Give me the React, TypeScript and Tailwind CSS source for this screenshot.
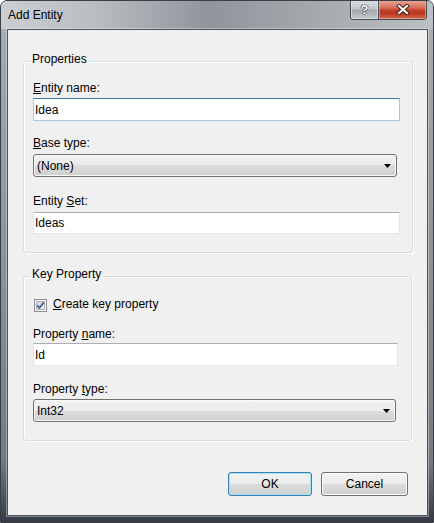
import React from "react";

const font = "[font-family:'Segoe_UI','Liberation_Sans',Arial,sans-serif]";

function Label({ children }: { children: React.ReactNode }) {
  return <div className="h-4 text-[12px] leading-4 text-black">{children}</div>;
}

function TextBox({ value, focused, className = "" }: { value: string; focused?: boolean; className?: string }) {
  return (
    <input
      defaultValue={value}
      className={
        "block w-full bg-white pl-[1px] text-[12px] leading-4 text-black outline-none border " +
        (focused
          ? "border-[#a4c9e3] border-t-[#3d7bad] "
          : "border-[#e2e3ea] border-t-[#abadb3] border-b-[#e3e9ef] ") +
        font +
        " " +
        className
      }
    />
  );
}

function Combo({ value, className = "" }: { value: string; className?: string }) {
  return (
    <div
      className={
        "flex items-center justify-between rounded-[3px] border border-[#707070] pl-[3px] pr-[5px] text-[12px] leading-4 text-black shadow-[inset_0_0_0_1px_#f8f8f8] bg-[linear-gradient(180deg,#f2f2f2_0%,#ebebeb_50%,#dddddd_50%,#cfcfcf_100%)] " +
        className
      }
    >
      <span>{value}</span>
      <svg width="7" height="4" viewBox="0 0 7 4">
        <path d="M0 0h7L3.5 4z" fill="#000" />
      </svg>
    </div>
  );
}

function Group({ title, children, className = "" }: { title: string; children: React.ReactNode; className?: string }) {
  return (
    <fieldset className={"rounded-[3px] border border-[#d5dfe5] shadow-[inset_1px_1px_0_#fff,1px_1px_0_#fff] " + className}>
      <legend className="ml-[7px] bg-[#f0f0f0] px-[1px] pb-[4px] text-[12px] leading-4 text-black">{title}</legend>
      {children}
    </fieldset>
  );
}

function Btn({ children, primary }: { children: React.ReactNode; primary?: boolean }) {
  return (
    <div
      className={
        "flex h-[24px] items-center justify-center rounded-[3px] border text-[12px] leading-4 text-black bg-[linear-gradient(180deg,#f2f2f2_0%,#ebebeb_50%,#dddddd_50%,#cfcfcf_100%)] " +
        (primary
          ? "w-[84px] border-[#3c7fb1] shadow-[inset_0_0_0_1px_#9fe2fa]"
          : "w-[87px] border-[#707070] shadow-[inset_0_0_0_1px_#fbfbfb]")
      }
    >
      {children}
    </div>
  );
}

function CheckBox() {
  return (
    <svg width="13" height="13" viewBox="0 0 13 13">
      <defs>
        <linearGradient id="cbg" x1="0" y1="0" x2="1" y2="1">
          <stop offset="0" stopColor="#cbcfd5" />
          <stop offset="1" stopColor="#f6f6f6" />
        </linearGradient>
      </defs>
      <rect x="0.5" y="0.5" width="12" height="12" fill="#f4f4f4" stroke="#8e8f8f" />
      <rect x="2.5" y="2.5" width="8" height="8" fill="url(#cbg)" stroke="#aeb3b9" strokeWidth="1" />
      <path d="M3.2 6.4 L5.4 9 L9.8 3.4" fill="none" stroke="#4a5f97" strokeWidth="1.8" strokeLinejoin="round" />
    </svg>
  );
}

export default function App() {
  return (
    <div
      className={
        "flex h-[523px] w-[434px] flex-col overflow-hidden rounded-t-[7px] border border-[#3a3f46] bg-[linear-gradient(180deg,#b9bec3_0%,#a3a9ae_8%,#8c9298_50%,#737a81_88%,#343b44_100%)] " +
        font
      }
    >
      {/* Title bar */}
      <div className="flex h-[28px] items-start justify-between pr-[6px] bg-[linear-gradient(90deg,#cbcfd3_0%,#b8bdc2_22%,#8f959b_48%,#a2a7ac_70%,#bcc0c4_100%)]">
        <span className="pl-[7px] pt-[6px] text-[12px] leading-4 text-black">Add Entity</span>
        <div className="-mt-[1px] flex h-[20px] overflow-hidden rounded-b-[4px] border-x border-b border-[#454b53]">
          <div className="flex w-[27px] items-center justify-center bg-[linear-gradient(180deg,#dcdfe2_0%,#c3c7cb_45%,#a4a9af_55%,#c6cace_100%)] shadow-[inset_0_0_0_1px_rgba(255,255,255,0.45)]">
            <span className="text-[13px] font-bold leading-4 text-white [text-shadow:0_0_1px_#222,0_0_1px_#222,0_0_1px_#222]">?</span>
          </div>
          <div className="w-[1px] bg-[#454b53]" />
          <div className="flex w-[47px] items-center justify-center bg-[linear-gradient(180deg,#e8a99a_0%,#d7705c_40%,#c0402a_55%,#b8361f_70%,#d96a4a_100%)] shadow-[inset_0_0_0_1px_rgba(255,255,255,0.35)]">
            <svg width="14" height="11" viewBox="0 0 14 11">
              <path d="M3 2 L11 9 M11 2 L3 9" stroke="#3a1a14" strokeWidth="4" strokeLinecap="square" />
              <path d="M3 2 L11 9 M11 2 L3 9" stroke="#fff" strokeWidth="2.2" strokeLinecap="square" />
            </svg>
          </div>
        </div>
      </div>

      {/* Client area */}
      <div className="mb-[6px] ml-[6px] mr-[5px] flex flex-1 flex-col border border-[#4b525a] bg-[#f0f0f0] shadow-[0_0_0_1px_rgba(255,255,255,0.35)]">
        <Group title="Properties" className="ml-[15px] mr-[14px] mt-[21px]">
          <div className="pb-[18px] pl-[9px] pr-[12px] pt-[9px]">
            <Label>
              <u>E</u>ntity name:
            </Label>
            <TextBox value="Idea" focused className="mt-[2px] h-[23px]" />
            <div className="mt-[14px]">
              <Label>
                <u>B</u>ase type:
              </Label>
            </div>
            <Combo value="(None)" className="mr-[3px] mt-[3px] h-[23px]" />
            <div className="mt-[16px]">
              <Label>
                Entity <u>S</u>et:
              </Label>
            </div>
            <TextBox value="Ideas" className="mt-[3px] h-[22px]" />
          </div>
        </Group>

        <Group title="Key Property" className="ml-[15px] mr-[15px] mt-[13px]">
          <div className="pb-[18px] pl-[9px] pr-[13px] pt-[10px]">
            <div className="flex h-4 items-center gap-[6px] pl-[1px] text-[12px] leading-4 text-black">
              <span className="mt-[2px] flex">
                <CheckBox />
              </span>
              <span>
                <u>C</u>reate key property
              </span>
            </div>
            <div className="mt-[14px]">
              <Label>
                Property <u>n</u>ame:
              </Label>
            </div>
            <TextBox value="Id" className="mt-[1px] h-[23px]" />
            <div className="mt-[15px]">
              <Label>
                Property <u>t</u>ype:
              </Label>
            </div>
            <Combo value="Int32" className="mr-[2px] mt-[2px] h-[23px]" />
          </div>
        </Group>

        <div className="mr-[19px] mt-[31px] flex justify-end gap-[9px]">
          <Btn primary>OK</Btn>
          <Btn>Cancel</Btn>
        </div>
      </div>
    </div>
  );
}
